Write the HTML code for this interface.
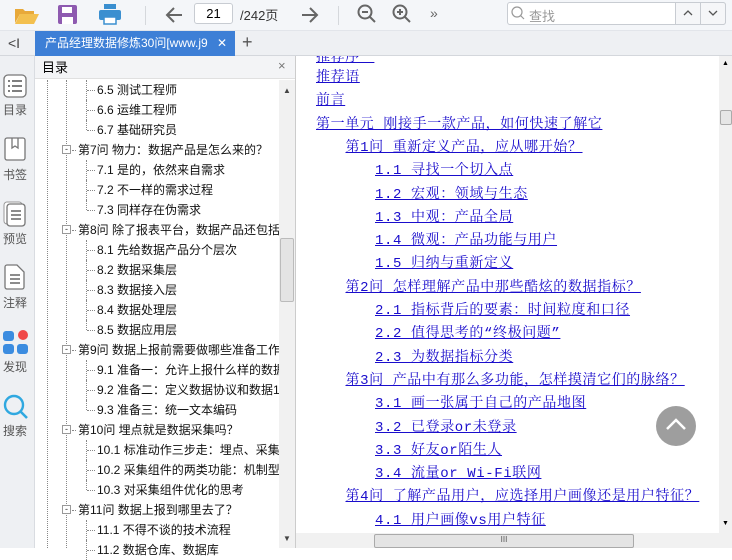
<!DOCTYPE html>
<html><head><meta charset="utf-8"><style>
*{margin:0;padding:0;box-sizing:border-box}
body{width:732px;height:548px;overflow:hidden;background:#fff;font-family:"Liberation Sans","Noto Sans CJK SC",sans-serif;position:relative}
.abs{position:absolute}
#tb{left:0;top:0;width:732px;height:31px;background:#f4f6f9;border-bottom:1px solid #e2e5ea}
#tabs{left:0;top:31px;width:732px;height:25px;background:#eef0f3;border-bottom:1px solid #d4d7dc}
#side{left:0;top:56px;width:35px;height:492px;background:#eef0f3;border-right:1px solid #d9dce1}
.sl{position:absolute;left:0;width:30px;text-align:center;font-size:12px;color:#555}
#toc{left:35px;top:56px;width:261px;height:492px;background:#fff;border-right:1px solid #ccc}
.ti{position:absolute;font-size:12px;color:#111;white-space:nowrap;height:20px;line-height:20px}
.c{position:absolute;font-family:"Liberation Mono","Noto Serif CJK SC",serif;font-size:14px;letter-spacing:0.6px;color:#1a0dcc;text-decoration:underline;white-space:nowrap;line-height:18px}
</style></head><body>
<div id="tb" class="abs">
 <svg class="abs" style="left:14px;top:5px" width="26" height="20"><path d="M1 4h8l2 2h9v3H6L1 18z" fill="#e8a93a"/><path d="M6 9h19l-5 10H1z" fill="#f3c04f"/></svg>
 <svg class="abs" style="left:58px;top:5px" width="19" height="19"><rect x="0" y="0" width="19" height="19" rx="2" fill="#8e5ab0"/><rect x="4" y="2" width="10" height="6" fill="#fff"/><rect x="4" y="12" width="11" height="7" fill="#fff"/></svg>
 <svg class="abs" style="left:99px;top:4px" width="22" height="21"><rect x="5" y="0" width="12" height="5" fill="#3a8fd0"/><rect x="0" y="6" width="22" height="10" rx="2" fill="#3a8fd0"/><rect x="5" y="13" width="12" height="7" fill="#fff" stroke="#3a8fd0" stroke-width="1.5"/></svg>
 <div class="abs" style="left:145px;top:6px;width:1px;height:19px;background:#d5d8dc"></div>
 <svg class="abs" style="left:164px;top:6px" width="20" height="18"><path d="M18 9H3M10 2L3 9l7 7" fill="none" stroke="#666" stroke-width="2"/></svg>
 <div class="abs" style="left:194px;top:3px;width:39px;height:21px;border:1px solid #c8ccd2;border-radius:3px;background:#fff;font-size:13px;text-align:center;line-height:19px">21</div>
 <div class="abs" style="left:240px;top:5px;font-size:13px;color:#333">/242页</div>
 <svg class="abs" style="left:300px;top:6px" width="20" height="18"><path d="M2 9h15M10 2l7 7-7 7" fill="none" stroke="#666" stroke-width="2"/></svg>
 <div class="abs" style="left:338px;top:6px;width:1px;height:19px;background:#d5d8dc"></div>
 <svg class="abs" style="left:357px;top:4px" width="20" height="20"><circle cx="8" cy="8" r="6.5" fill="none" stroke="#666" stroke-width="2"/><path d="M5 8h6M13 13l5 5" stroke="#666" stroke-width="2"/></svg>
 <svg class="abs" style="left:392px;top:4px" width="20" height="20"><circle cx="8" cy="8" r="6.5" fill="none" stroke="#666" stroke-width="2"/><path d="M5 8h6M8 5v6M13 13l5 5" stroke="#666" stroke-width="2"/></svg>
 <div class="abs" style="left:430px;top:5px;font-size:14px;color:#666">»</div>
 <div class="abs" style="left:507px;top:2px;width:219px;height:23px;border:1px solid #c8ccd2;border-radius:3px;background:#fff"></div>
 <div class="abs" style="left:675px;top:2px;width:51px;height:23px;border:1px solid #c8ccd2;border-radius:0 3px 3px 0;background:#f5f6f8"></div>
 <div class="abs" style="left:700px;top:2px;width:1px;height:23px;background:#c8ccd2"></div>
 <svg class="abs" style="left:511px;top:6px" width="14" height="15"><circle cx="6" cy="6" r="5" fill="none" stroke="#999" stroke-width="1.2"/><path d="M9.5 9.5L13 13" stroke="#999" stroke-width="1.2"/></svg>
 <div class="abs" style="left:529px;top:6px;font-size:13px;color:#999">查找</div>
 <svg class="abs" style="left:682px;top:9px" width="12" height="8"><path d="M2 6l4-4 4 4" fill="none" stroke="#555" stroke-width="1.3"/></svg>
 <svg class="abs" style="left:707px;top:9px" width="12" height="8"><path d="M2 2l4 4 4-4" fill="none" stroke="#555" stroke-width="1.3"/></svg>
</div>
<div id="tabs" class="abs">
 <div class="abs" style="left:8px;top:4px;font-size:14px;color:#444">&lt;I</div>
 <div class="abs" style="left:35px;top:0;width:200px;height:25px;background:#3d7fd6;color:#fff;font-size:12px;line-height:25px;padding-left:10px;white-space:nowrap;overflow:hidden">产品经理数据修炼30问[www.j9</div>
 <div class="abs" style="left:217px;top:5px;color:#fff;font-size:12px">✕</div>
 <div class="abs" style="left:242px;top:1px;font-size:18px;color:#555">+</div>
</div>
<div id="side" class="abs">
 <svg class="abs" style="left:3px;top:18px" width="24" height="24"><rect x="1" y="1" width="22" height="22" rx="4" fill="#fff" stroke="#777" stroke-width="1.3"/><path d="M5 7h2M9 7h10M5 12h2M9 12h10M5 17h2M9 17h10" stroke="#555" stroke-width="1.6"/></svg>
 <div class="sl" style="top:45px">目录</div>
 <svg class="abs" style="left:4px;top:81px" width="22" height="24"><rect x="1" y="1" width="20" height="22" rx="2" fill="#fff" stroke="#777" stroke-width="1.3"/><path d="M8 1v10l3-2 3 2V1" fill="none" stroke="#777" stroke-width="1.3"/></svg>
 <div class="sl" style="top:110px">书签</div>
 <svg class="abs" style="left:3px;top:145px" width="24" height="26"><rect x="1" y="1" width="18" height="22" rx="3" fill="#fff" stroke="#999"/><rect x="4" y="3" width="18" height="22" rx="3" fill="#fff" stroke="#777" stroke-width="1.3"/><path d="M8 10h10M8 14h10M8 18h10" stroke="#666" stroke-width="1.4"/></svg>
 <div class="sl" style="top:174px">预览</div>
 <svg class="abs" style="left:4px;top:208px" width="22" height="26"><path d="M1 3a2 2 0 012-2h10l7 7v15a2 2 0 01-2 2H3a2 2 0 01-2-2z" fill="#fff" stroke="#777" stroke-width="1.3"/><path d="M6 11h10M6 15h10M6 19h10" stroke="#666" stroke-width="1.4"/></svg>
 <div class="sl" style="top:238px">注释</div>
 <svg class="abs" style="left:3px;top:273px" width="26" height="26"><rect x="0" y="2" width="11" height="10" rx="3" fill="#3b8ce0"/><circle cx="20" cy="6" r="5" fill="#f04848"/><rect x="0" y="15" width="11" height="10" rx="3" fill="#3b8ce0"/><rect x="14" y="15" width="11" height="10" rx="3" fill="#3b8ce0"/></svg>
 <div class="sl" style="top:302px">发现</div>
 <svg class="abs" style="left:3px;top:338px" width="26" height="26"><circle cx="11" cy="11" r="9" fill="none" stroke="#2fa8e0" stroke-width="2.4"/><path d="M18 18l6 6" stroke="#2fa8e0" stroke-width="2.6"/></svg>
 <div class="sl" style="top:366px">搜索</div>
</div>
<div id="toc" class="abs">
 <div class="abs" style="left:0;top:0;width:260px;height:23px;background:#f3f4f6;border-bottom:1px solid #e0e0e0;font-size:13px;line-height:23px;padding-left:7px">目录</div>
 <div class="abs" style="left:243px;top:2px;color:#777;font-size:13px">×</div>
 <div class="abs" style="left:244px;top:24px;width:16px;height:468px;background:#f1f1f1"></div>
 <div class="abs" style="left:245px;top:182px;width:14px;height:64px;background:#e4e4e4;border:1px solid #bbb;border-radius:2px"></div>
 <div class="abs" style="left:248px;top:30px;font-size:8px;color:#444">▲</div>
 <div class="abs" style="left:248px;top:478px;font-size:8px;color:#444">▼</div>
 <div class="abs" style="left:12px;top:24px;height:468px;border-left:1px dotted #888"></div>
 <div class="abs" style="left:31px;top:24px;height:468px;border-left:1px dotted #888"></div>
 <div id="ti"></div>
</div>
<div class="abs" style="left:296px;top:56px;width:423px;height:477px;overflow:hidden">
 <div class="c" style="left:20px;top:-7px">推荐序一</div>
 <div id="cc"></div>
</div>
<div class="abs" style="left:719px;top:56px;width:13px;height:477px;background:#f1f1f1"></div>
<div class="abs" style="left:720px;top:110px;width:12px;height:15px;background:#e6e6e6;border:1px solid #aaa;border-radius:2px"></div>
<div class="abs" style="left:722px;top:60px;font-size:7px">▲</div>
<div class="abs" style="left:722px;top:520px;font-size:7px">▼</div>
<div class="abs" style="left:296px;top:533px;width:436px;height:15px;background:#f1f1f1"></div>
<div class="abs" style="left:374px;top:534px;width:260px;height:14px;background:#e4e4e4;border:1px solid #aaa;border-radius:2px;font-size:8px;text-align:center;color:#555">III</div>
<div class="abs" style="left:656px;top:406px;width:40px;height:40px;border-radius:50%;background:#9e9e9e"></div>
<svg class="abs" style="left:664px;top:416px" width="24" height="16"><path d="M3 13l9-9 9 9" fill="none" stroke="#fff" stroke-width="2.5"/></svg>
<script>
var t=[[2,"6.5 测试工程师"],[2,"6.6 运维工程师"],[2,"6.7 基础研究员"],[1,"第7问 物力：数据产品是怎么来的？"],[2,"7.1 是的，依然来自需求"],[2,"7.2 不一样的需求过程"],[2,"7.3 同样存在伪需求"],[1,"第8问 除了报表平台，数据产品还包括"],[2,"8.1 先给数据产品分个层次"],[2,"8.2 数据采集层"],[2,"8.3 数据接入层"],[2,"8.4 数据处理层"],[2,"8.5 数据应用层"],[1,"第9问 数据上报前需要做哪些准备工作"],[2,"9.1 准备一：允许上报什么样的数据"],[2,"9.2 准备二：定义数据协议和数据1"],[2,"9.3 准备三：统一文本编码"],[1,"第10问 埋点就是数据采集吗？"],[2,"10.1 标准动作三步走：埋点、采集"],[2,"10.2 采集组件的两类功能：机制型"],[2,"10.3 对采集组件优化的思考"],[1,"第11问 数据上报到哪里去了？"],[2,"11.1 不得不谈的技术流程"],[2,"11.2 数据仓库、数据库"]];
var h="";t.forEach(function(r,i){var y=24+i*20;
if(r[0]==1){h+='<div class="abs" style="left:27px;top:'+(y+5)+'px;width:9px;height:9px;border:1px solid #999;background:#fff;font-size:9px;line-height:6px;text-align:center;color:#333">-</div><div class="abs" style="left:37px;top:'+(y+10)+'px;width:4px;border-top:1px dotted #888"></div><div class="ti" style="left:43px;top:'+y+'px;width:201px;overflow:hidden">'+r[1]+'</div>';}
else{h+='<div class="abs" style="left:52px;top:'+(y+10)+'px;width:8px;border-top:1px dotted #888"></div><div class="abs" style="left:51px;top:'+y+'px;height:'+(i==2||i==6||i==12||i==16||i==20?10:20)+'px;border-left:1px dotted #888"></div><div class="ti" style="left:62px;top:'+y+'px;width:182px;overflow:hidden">'+r[1]+'</div>';}});
document.getElementById("ti").outerHTML=h;
var c=[[0,"推荐语"],[0,"前言"],[0,"第一单元 刚接手一款产品，如何快速了解它"],[1,"第1问 重新定义产品，应从哪开始？"],[2,"1.1 寻找一个切入点"],[2,"1.2 宏观：领域与生态"],[2,"1.3 中观：产品全局"],[2,"1.4 微观：产品功能与用户"],[2,"1.5 归纳与重新定义"],[1,"第2问 怎样理解产品中那些酷炫的数据指标？"],[2,"2.1 指标背后的要素：时间粒度和口径"],[2,"2.2 值得思考的“终极问题”"],[2,"2.3 为数据指标分类"],[1,"第3问 产品中有那么多功能，怎样摸清它们的脉络？"],[2,"3.1 画一张属于自己的产品地图"],[2,"3.2 已登录or未登录"],[2,"3.3 好友or陌生人"],[2,"3.4 流量or Wi-Fi联网"],[1,"第4问 了解产品用户，应选择用户画像还是用户特征？"],[2,"4.1 用户画像vs用户特征"]];
var g="";c.forEach(function(r,i){g+='<div class="c" style="left:'+(20+r[0]*29.5)+'px;top:'+(13+i*23.3)+'px">'+r[1]+'</div>';});
document.getElementById("cc").outerHTML=g;
</script>
</body></html>
